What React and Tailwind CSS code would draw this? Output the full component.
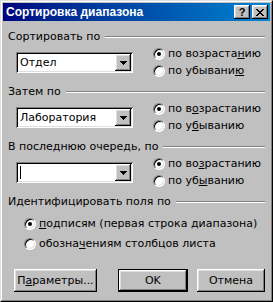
const raised = 'shadow-[inset_-1px_-1px_#000,inset_1px_1px_#fff,inset_-2px_-2px_#808080,inset_2px_2px_#dfdfdf]';
const sunken = 'shadow-[inset_1px_1px_#808080,inset_-1px_-1px_#fff,inset_2px_2px_#000,inset_-2px_-2px_#dfdfdf]';

function U({ children }) {
  return <span className="underline underline-offset-[1px] decoration-1">{children}</span>;
}

function Etched({ label }) {
  return (
    <div className="h-[14px] flex items-center">
      <span className="whitespace-nowrap">{label}</span>
      <div className="flex-1 ml-[5px] h-[2px] border-t border-t-[#808080] border-b border-b-white" />
    </div>
  );
}

function Combo({ value, caret }) {
  return (
    <div className={`w-[117px] h-[21px] bg-white ${sunken} flex items-center p-[2px]`}>
      <span className="flex-1 pl-[2px] flex items-center h-full">
        {caret && <span className="w-px h-[13px] bg-black" />}
        {value}
      </span>
      <div className={`w-[16px] h-[17px] bg-[#c0c0c0] ${raised} flex items-center justify-center`}>
        <svg width="7" height="4" viewBox="0 0 7 4">
          <path d="M0 0h7v1h-1v1h-1v1h-1v1h-1v-1h-1v-1h-1v-1h-1z" fill="#000" />
        </svg>
      </div>
    </div>
  );
}

function Radio({ checked, children }) {
  return (
    <div className="h-[17px] flex items-center">
      <div className="relative w-[12px] h-[12px] rounded-full bg-white border border-t-[#808080] border-l-[#808080] border-r-white border-b-white shadow-[inset_1px_1px_#000,inset_-1px_-1px_#dfdfdf]">
        {checked && <div className="absolute left-[3px] top-[3px] w-[4px] h-[4px] rounded-full bg-black" />}
      </div>
      <span className="ml-[3px] whitespace-nowrap">{children}</span>
    </div>
  );
}

function Section({ label, value, caret, asc, desc, className }) {
  return (
    <div className={className}>
      <Etched label={label} />
      <div className="flex items-start mt-[1px]">
        <div className="ml-[8px] mt-[7px]">
          <Combo value={value} caret={caret} />
        </div>
        <div className="ml-[20px]">
          <Radio checked>{asc}</Radio>
          <Radio>{desc}</Radio>
        </div>
      </div>
    </div>
  );
}

function Button({ children, def, className }) {
  return (
    <div className={`${className} h-[23px] ${def ? 'border border-black' : ''}`}>
      <div className={`h-full bg-[#c0c0c0] ${raised} flex items-center justify-center`}>{children}</div>
    </div>
  );
}

export default function App() {
  return (
    <div
      className="w-[273px] h-[302px] bg-[#c0c0c0] border border-t-[#dfdfdf] border-l-[#dfdfdf] border-r-black border-b-black text-[11px] leading-[14px] text-black"
      style={{ fontFamily: '"DejaVu Sans", Verdana, sans-serif' }}
    >
      <div className="h-full border border-t-white border-l-white border-r-[#808080] border-b-[#808080] p-px flex flex-col">
        <div className="h-[18px] bg-linear-to-r from-[#000080] to-[#1084d0] flex items-center pl-[3px] pr-[2px]">
          <span className="flex-1 text-white font-bold text-[12px] font-['Liberation_Sans',Arial,sans-serif]">Сортировка диапазона</span>
          <div className={`w-[16px] h-[14px] bg-[#c0c0c0] ${raised} flex items-center justify-center text-[11px] font-bold leading-none font-['Liberation_Sans',Arial,sans-serif]`}>?</div>
          <div className={`ml-[2px] w-[16px] h-[14px] bg-[#c0c0c0] ${raised} flex items-center justify-center`}>
            <svg width="8" height="7" viewBox="0 0 8 7">
              <path d="M0 0h2v1h1v1h2v-1h1v-1h2v1h-1v1h-1v1h-1v1h1v1h1v1h1v1h-2v-1h-1v-1h-2v1h-1v1h-2v-1h1v-1h1v-1h1v-1h-1v-1h-1v-1h-1z" fill="#000" />
            </svg>
          </div>
        </div>

        <div className="pl-[5px] pr-[5px]">
          <Section
            className="mt-[9px]"
            label="Сортировать по"
            value="Отдел"
            asc={<>по возраста<U>н</U>ию</>}
            desc={<>по убывани<U>ю</U></>}
          />
          <Section
            className="mt-[6px]"
            label="Затем по"
            value="Лаборатория"
            asc={<>по в<U>о</U>зрастанию</>}
            desc={<>по у<U>б</U>ыванию</>}
          />
          <Section
            className="mt-[6px]"
            label="В последнюю очередь, по"
            value=""
            caret
            asc={<>по во<U>з</U>растанию</>}
            desc={<>по уб<U>ы</U>ванию</>}
          />
          <div className="mt-[6px]">
            <Etched label="Идентифицировать поля по" />
            <div className="ml-[16px] mt-[6px]">
              <Radio checked><U>п</U>одписям (первая строка диапазона)</Radio>
              <div className="mt-[3px]">
                <Radio>обозна<U>ч</U>ениям столбцов листа</Radio>
              </div>
            </div>
          </div>
          <div className="flex mt-[17px] ml-[6px]">
            <Button className="w-[84px]">П<U>а</U>раметры...</Button>
            <Button def className="ml-[21px] w-[71px]">OK</Button>
            <Button className="ml-[9px] w-[69px]">Отмена</Button>
          </div>
        </div>
      </div>
    </div>
  );
}
